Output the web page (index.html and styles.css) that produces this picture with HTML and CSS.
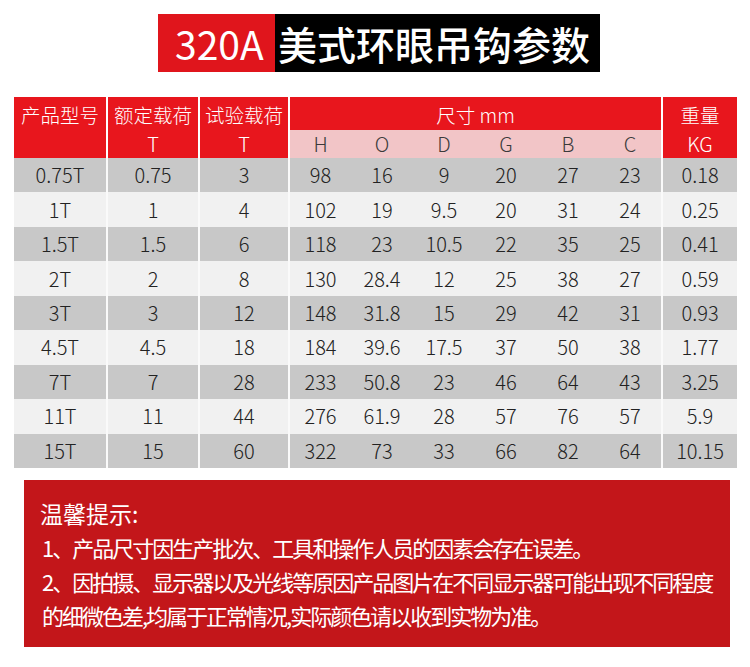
FILE: index.html
```html
<!DOCTYPE html>
<html lang="zh-CN">
<head>
<meta charset="utf-8">
<link rel="stylesheet" href="styles.css">
</head>
<body>
<div class="title-wrap">
  <div class="title">
    <span class="title-red">320A</span><span class="title-black">美式环眼吊钩参数</span>
  </div>
</div>
<table class="spec">
  <colgroup>
    <col class="c1"><col class="c2"><col class="c3">
    <col class="cd"><col class="cd"><col class="cd"><col class="cd"><col class="cd"><col class="cd6">
    <col class="cw">
  </colgroup>
  <thead>
    <tr class="h1">
      <th class="main">产品型号</th>
      <th class="main">额定载荷</th>
      <th class="main">试验载荷</th>
      <th class="main" colspan="6">尺寸 mm</th>
      <th class="main">重量</th>
    </tr>
    <tr class="h2">
      <th class="main"></th>
      <th class="main">T</th>
      <th class="main">T</th>
      <th class="sub main">H</th>
      <th class="sub">O</th>
      <th class="sub">D</th>
      <th class="sub">G</th>
      <th class="sub">B</th>
      <th class="sub">C</th>
      <th class="main">KG</th>
    </tr>
  </thead>
  <tbody>
    <tr class="dark"><td class="main">0.75T</td><td class="main">0.75</td><td class="main">3</td><td class="main">98</td><td>16</td><td>9</td><td>20</td><td>27</td><td>23</td><td class="main">0.18</td></tr>
    <tr class="light"><td class="main">1T</td><td class="main">1</td><td class="main">4</td><td class="main">102</td><td>19</td><td>9.5</td><td>20</td><td>31</td><td>24</td><td class="main">0.25</td></tr>
    <tr class="dark"><td class="main">1.5T</td><td class="main">1.5</td><td class="main">6</td><td class="main">118</td><td>23</td><td>10.5</td><td>22</td><td>35</td><td>25</td><td class="main">0.41</td></tr>
    <tr class="light"><td class="main">2T</td><td class="main">2</td><td class="main">8</td><td class="main">130</td><td>28.4</td><td>12</td><td>25</td><td>38</td><td>27</td><td class="main">0.59</td></tr>
    <tr class="dark"><td class="main">3T</td><td class="main">3</td><td class="main">12</td><td class="main">148</td><td>31.8</td><td>15</td><td>29</td><td>42</td><td>31</td><td class="main">0.93</td></tr>
    <tr class="light"><td class="main">4.5T</td><td class="main">4.5</td><td class="main">18</td><td class="main">184</td><td>39.6</td><td>17.5</td><td>37</td><td>50</td><td>38</td><td class="main">1.77</td></tr>
    <tr class="dark"><td class="main">7T</td><td class="main">7</td><td class="main">28</td><td class="main">233</td><td>50.8</td><td>23</td><td>46</td><td>64</td><td>43</td><td class="main">3.25</td></tr>
    <tr class="light"><td class="main">11T</td><td class="main">11</td><td class="main">44</td><td class="main">276</td><td>61.9</td><td>28</td><td>57</td><td>76</td><td>57</td><td class="main">5.9</td></tr>
    <tr class="dark"><td class="main">15T</td><td class="main">15</td><td class="main">60</td><td class="main">322</td><td>73</td><td>33</td><td>66</td><td>82</td><td>64</td><td class="main">10.15</td></tr>
  </tbody>
</table>
<div class="notice">
  <div class="notice-title">温馨提示:</div>
  <p class="notice-line">1、产品尺寸因生产批次、工具和操作人员的因素会存在误差。</p>
  <p class="notice-line">2、因拍摄、显示器以及光线等原因产品图片在不同显示器可能出现不同程度</p>
  <p class="notice-line">的细微色差,均属于正常情况,实际颜色请以收到实物为准。</p>
</div>
</body>
</html>
```
FILE: styles.css
```css
* { box-sizing: border-box; }
html, body { margin: 0; padding: 0; background: #fff; }
body {
  font-family: "Noto Sans CJK SC", "Noto Sans", sans-serif;
  width: 750px;
}
.title-wrap {
  display: flex;
  justify-content: center;
  padding: 14px 0 0 8px;
}
.title {
  display: flex;
  height: 58px;
}
.title-red, .title-black {
  display: flex;
  align-items: center;
  color: #fff;
  font-size: 39px;
  font-weight: 500;
  line-height: 1;
}
.title-red {
  background: #e0151c;
  padding: 0 10px 0 17px;
  width: 117px;
  font-weight: 400;
}
.title-black {
  background: #000;
  padding: 0 10px 0 3px;
  width: 325px;
}
.spec {
  margin: 25px 0 0 14px;
  width: 723px;
  border-collapse: collapse;
  table-layout: fixed;
}
.c1 { width: 93px; }
.c2 { width: 92px; }
.c3 { width: 90px; }
.cd { width: 62px; }
.cd6 { width: 63px; }
.cw { width: 75px; }
.spec th, .spec td {
  padding: 0;
  text-align: center;
  font-weight: 300;
}
.spec .main { border-left: 2px solid #fff; }
.spec tr > :first-child { border-left: none; }
.h1 th {
  background: #e8161d;
  color: #fff;
  font-size: 19.5px;
  height: 33px;
  vertical-align: middle;
  padding-top: 2px;
}
.h2 th {
  background: #e8161d;
  color: #fff;
  font-size: 20px;
  height: 28px;
  vertical-align: middle;
  line-height: 1;
  padding-bottom: 1px;
}
.h2 th.sub {
  background: #f2c5c7;
  color: #3a3a3a;
}
.spec tbody td {
  height: 34.45px;
  font-size: 20px;
  color: #222;
  line-height: 1;
}
.spec tbody td.main { border-left-color: #fafafa; }
.dark td { background: #c8c8c8; }
.light td { background: #f1f1f1; }
.notice {
  margin: 12px 0 0 24px;
  width: 706px;
  background: #c3161a;
  color: #fff;
  padding: 16px 10px 15px 16px;
}
.notice-title {
  font-size: 23px;
  line-height: 34px;
}
.notice-line {
  margin: 0;
  padding-left: 2px;
  font-size: 22px;
  letter-spacing: -2px;
  line-height: 34px;
  white-space: nowrap;
}
```
